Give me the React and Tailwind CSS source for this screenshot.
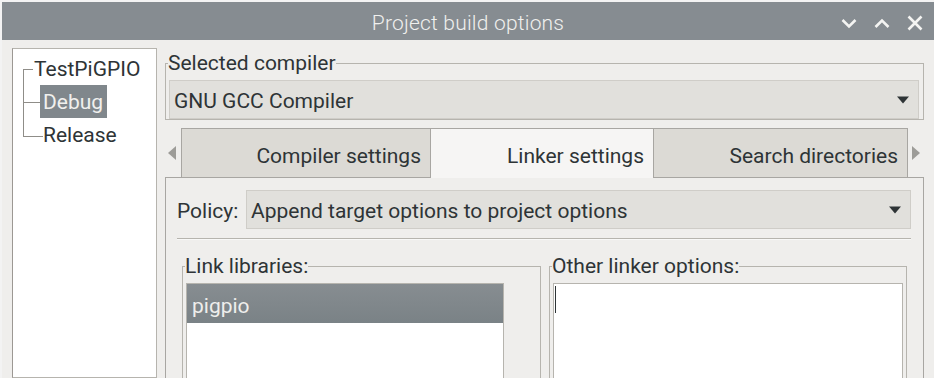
const DropArrow = () => (
  <svg width="12" height="8" viewBox="0 0 12 8" className="shrink-0">
    <path d="M0 0.5H12L6 7.5Z" fill="#2e3436" />
  </svg>
);

function Combo({ text, className = "" }) {
  return (
    <div
      className={`flex items-center justify-between h-[39px] bg-[#e1e0dc] border border-[#cfcdc8] pl-[4px] pr-[9px] ${className}`}
    >
      <span className="text-[21px] leading-[20px] pt-[3px]">{text}</span>
      <DropArrow />
    </div>
  );
}

function Group({ label, className = "", children }) {
  return (
    <fieldset className={`border border-[#b6b4ae] ${className}`}>
      <legend className="ml-[-1px] text-[21px] leading-[20px]">{label}</legend>
      {children}
    </fieldset>
  );
}

function Tab({ label, active, className = "" }) {
  return (
    <div
      className={`flex justify-end h-[49px] border-t border-l border-[#a8a6a2] pr-[9px] pt-[17px] text-[21px] leading-[20px] ${
        active ? "bg-[#f6f5f4] h-[50px] relative z-10" : "bg-[#dcdad5]"
      } ${className}`}
    >
      {label}
    </div>
  );
}

export default function App() {
  return (
    <div className="w-[934px] h-[378px] overflow-hidden bg-[#f3f3f3] pt-[2px] pl-[2px] font-[Roboto,sans-serif] text-[#2e3436]">
      <div className="h-[376px] bg-[#efeeec] flex flex-col">
        {/* TITLE BAR */}
        <div className="h-[38px] shrink-0 bg-[#868c91] relative flex items-center justify-center pt-[4px]">
          <span className="text-[21px] leading-[20px] font-light text-[#f0f0ee] tracking-[0.2px]">
            Project build options
          </span>
          <div className="absolute right-[11px] top-[13px] flex items-center gap-[17px]">
            <svg width="16" height="12" viewBox="0 0 16 12">
              <path d="M1.5 3L8 9.5L14.5 3" stroke="#f4f4f2" strokeWidth="2.6" fill="none" />
            </svg>
            <svg width="16" height="12" viewBox="0 0 16 12">
              <path d="M1.5 10L8 3.5L14.5 10" stroke="#f4f4f2" strokeWidth="2.6" fill="none" />
            </svg>
            <svg width="16" height="16" viewBox="0 0 16 16">
              <path d="M1.5 1.5L14.5 14.5M14.5 1.5L1.5 14.5" stroke="#f4f4f2" strokeWidth="2.6" fill="none" />
            </svg>
          </div>
        </div>

        {/* BODY */}
        <div className="flex flex-1 pt-[8px] pl-[10px] min-h-0">
          {/* TREE */}
          <div className="relative w-[145px] shrink-0 bg-white border border-[#b6b4ae] border-l-[#9c9893] pt-[3px]">
            <svg className="absolute left-0 top-0" width="40" height="100">
              <path d="M10.5 20V87.5M10 20.5H20M10 53.5H27M10 87.5H30" stroke="#8f8d88" strokeWidth="1" fill="none" />
            </svg>
            <div className="h-[33px] pt-[2px] leading-[31px] text-[21px] pl-[21px]">TestPiGPIO</div>
            <div className="h-[33px] pl-[27px]">
              <div className="w-[67px] h-[33px] bg-[#80878c] text-[#f0f0ee] pt-[2px] leading-[31px] text-[21px] pl-[3px]">
                Debug
              </div>
            </div>
            <div className="h-[33px] pt-[2px] leading-[31px] text-[21px] pl-[30px]">Release</div>
          </div>

          {/* RIGHT SIDE */}
          <div className="ml-[8px] w-[759px] shrink-0 flex flex-col">
            <Group label="Selected compiler" className="mt-[5px] pt-[7px] pl-[3px] pr-[4px]">
              <Combo text="GNU GCC Compiler" />
            </Group>

            {/* TABS */}
            <div className="mt-[8px] flex items-start h-[49px]">
              <div className="w-[16px] h-[49px] flex items-center pl-[3px]">
                <svg width="8" height="14" viewBox="0 0 8 14">
                  <path d="M8 0V14L0 7Z" fill="#9d9c98" />
                </svg>
              </div>
              <Tab label="Compiler settings" className="w-[249px]" />
              <Tab label="Linker settings" active className="w-[223px]" />
              <Tab label="Search directories" className="w-[255px] border-r" />
              <div className="w-[16px] h-[49px] flex items-center pl-[4px]">
                <svg width="8" height="14" viewBox="0 0 8 14">
                  <path d="M0 0V14L8 7Z" fill="#9d9c98" />
                </svg>
              </div>
            </div>

            {/* PANEL */}
            <div className="flex-1 border border-[#a8a6a2] bg-[#efeeec] pt-[12px] pl-[11px] pr-[12px]">
              <div className="flex items-center">
                <span className="w-[69px] text-[21px] leading-[20px] pt-[3px]">Policy:</span>
                <Combo text="Append target options to project options" className="flex-1" />
              </div>
              <div className="mt-[9px] h-[2px] border-t border-[#b6b4ae] bg-[#f8f8f7]" />

              <div className="flex mt-[16px] pl-[5px] pr-[4px] gap-[8px]">
                <Group label="Link libraries:" className="w-[359px] h-[140px] pt-[7px] pl-[3px]">
                  <div className="w-[318px] h-[120px] bg-white border border-[#b6b4ae]">
                    <div className="h-[39px] bg-gradient-to-b from-[#878d91] to-[#7a8286] text-[#eeeeec] text-[21px] leading-[20px] pl-[5px] pt-[12px]">
                      pigpio
                    </div>
                  </div>
                </Group>
                <Group label="Other linker options:" className="w-[358px] h-[140px] pt-[7px] pl-[3px] pr-[3px]">
                  <div className="h-[120px] bg-white border border-[#b6b4ae] pl-[1px] pt-[2px]">
                    <div className="w-[1px] h-[27px] bg-[#2e3436]" />
                  </div>
                </Group>
              </div>
            </div>
          </div>
        </div>
      </div>
    </div>
  );
}
